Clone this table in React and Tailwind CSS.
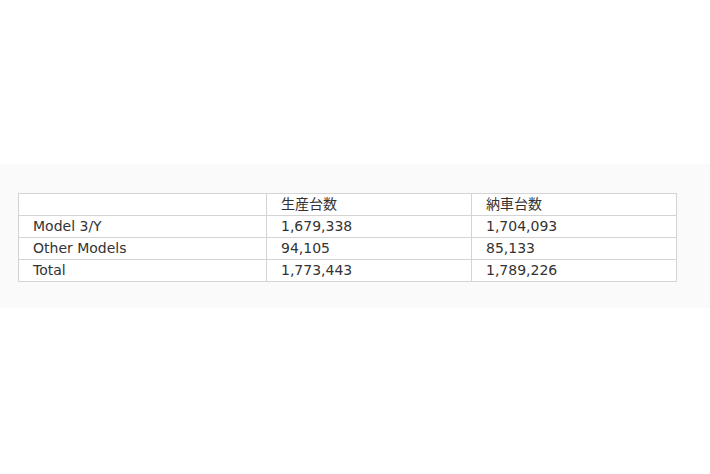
import React from 'react';

const rows = [
  ['Model 3/Y', '1,679,338', '1,704,093'],
  ['Other Models', '94,105', '85,133'],
  ['Total', '1,773,443', '1,789,226'],
];

export default function App() {
  return (
    <div className="min-h-screen bg-white" style={{ fontFamily: '"DejaVu Sans", "Noto Sans CJK JP", sans-serif' }}>
      <div className="h-[164px]" />
      {/* グレーの帯 */}
      <div className="bg-[#fafafa] pt-[29px] pb-[26px] pl-[18px]">
        <table className="border-collapse bg-white text-[14px] text-[#333] w-[658px] table-fixed">
          <colgroup>
            <col className="w-[248px]" />
            <col className="w-[205px]" />
            <col className="w-[205px]" />
          </colgroup>
          <tbody>
            <tr className="h-[22px]">
              <td className="border border-[#d4d4d4] px-[14px] py-0 leading-[21px]"></td>
              <td className="border border-[#d4d4d4] px-[14px] py-0 leading-[21px]">生産台数</td>
              <td className="border border-[#d4d4d4] px-[14px] py-0 leading-[21px]">納車台数</td>
            </tr>
            {rows.map((r) => (
              <tr key={r[0]} className="h-[22px]">
                {r.map((c, i) => (
                  <td key={i} className="border border-[#d4d4d4] px-[14px] py-0 leading-[21px]">{c}</td>
                ))}
              </tr>
            ))}
          </tbody>
        </table>
      </div>
    </div>
  );
}
